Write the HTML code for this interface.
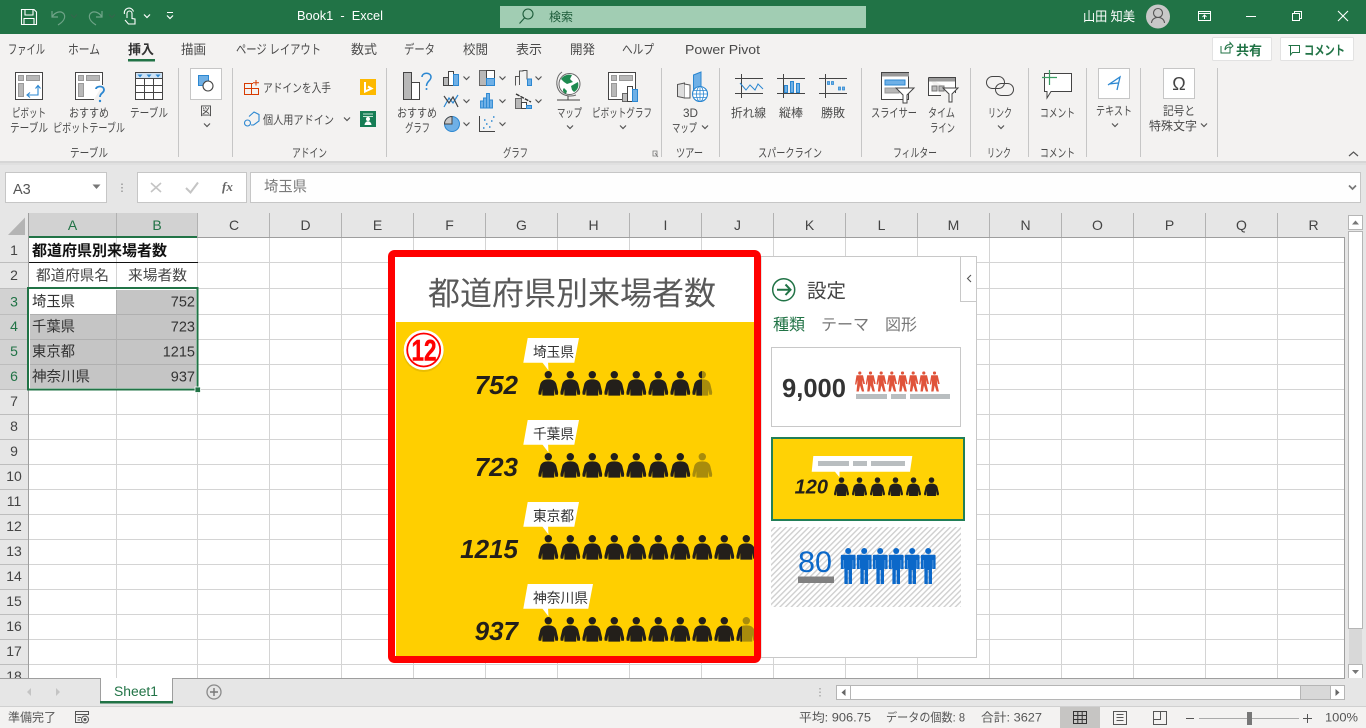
<!DOCTYPE html>
<html lang="ja"><head><meta charset="utf-8"><title>Book1 - Excel</title>
<style>
html,body{margin:0;padding:0;background:#fff;width:1366px;height:728px;overflow:hidden}
svg{display:block}
text{font-family:"Liberation Sans","Noto Sans CJK JP",sans-serif;white-space:pre}
.r{font-size:12px;fill:#4a4a4a}
.rt{font-size:13px;fill:#4a4a4a}
.w{fill:#fff}
.ln{fill:none;stroke:#444;stroke-width:1}
.bl{fill:#6fb0e6;stroke:#2b87d1;stroke-width:1}
.gy{fill:#b8b8b8;stroke:#444;stroke-width:1}
.g2{fill:#bdbdbd}
</style></head><body>
<svg xmlns="http://www.w3.org/2000/svg" width="1366" height="728" viewBox="0 0 1366 728">
<defs>
<path id="chev" d="M-3 -1.5L0 1.5L3 -1.5" fill="none" stroke="#555" stroke-width="1.2"/>
<path id="chw" d="M-3 -1.5L0 1.5L3 -1.5" fill="none" stroke="#fff" stroke-width="1.2"/>
<symbol id="p" viewBox="0 0 20 24.7" preserveAspectRatio="none"><circle cx="10" cy="3.7" r="3.7"/><path d="M10 8.4C5.500 8.400 3 10 2 13L0 21.500L0.400 23.700H3L3.900 18L4.100 24.700H15.900L16.100 18L17 23.700H19.600L20 21.500L18 13C17 10 14.500 8.400 10 8.400Z"/></symbol>
<symbol id="o" viewBox="0 0 10 20" preserveAspectRatio="none"><circle cx="4.800" cy="1.500" r="1.600"/><path d="M1.500 3.800H8L10 12.500H8.300L7.200 8.500L7.400 12L9.200 20H6.900L5 14L3.800 20H1.500L2.300 12L2.300 8.500L1.400 13H0Z"/></symbol>
<symbol id="m" viewBox="0 0 15 36" preserveAspectRatio="none"><circle cx="7.500" cy="3" r="3"/><path d="M1.500 6.800H13.500Q15 6.800 15 8.300V21H12.700L11.300 20.500V36H7.900V22H7.100V36H3.700V20.500L2.300 21H0V8.300Q0 6.800 1.500 6.800Z"/><path d="M2.800 12V20M12.200 12V20" stroke="#6ea6e0" stroke-width=".7" fill="none"/></symbol>
<g id="r7" fill="#231f1a"><use href="#p" x="0" y="0" width="20" height="24.7"/><use href="#p" x="22" y="0" width="20" height="24.7"/><use href="#p" x="44" y="0" width="20" height="24.7"/><use href="#p" x="66" y="0" width="20" height="24.7"/><use href="#p" x="88" y="0" width="20" height="24.7"/><use href="#p" x="110" y="0" width="20" height="24.7"/><use href="#p" x="132" y="0" width="20" height="24.7"/></g>
<polygon id="tail" points="542,362 548.5,370.5 548,362" fill="#fff"/>
<clipPath id="c1"><rect x="692" y="360" width="10" height="40"/></clipPath>
<clipPath id="c4"><rect x="736" y="626" width="6" height="20"/></clipPath>
<pattern id="h" width="4" height="4" patternUnits="userSpaceOnUse" patternTransform="rotate(45)"><rect width="4" height="4" fill="#fff"/><rect width="1.4" height="4" fill="#cfcfcf"/></pattern>
</defs>

<!-- base -->
<rect width="1366" height="728" fill="#e6e6e6"/>
<rect width="1366" height="34" fill="#217346"/>
<rect y="34" width="1366" height="127" fill="#f3f2f1"/>
<rect y="161" width="1366" height="2" fill="#d6d6d6"/><rect y="163" width="1366" height="2" fill="#e0e0e0"/>

<!-- title bar -->
<path d="M21.500 9.500H34L36.500 12V24.500H21.500ZM25 9.500V15H33V9.500M24 24.500V18.500H34V24.500" fill="none" stroke="#fff" stroke-width="1.100"/>
<g fill="none" stroke="#6fa488" stroke-width="1.200"><path d="M52 11V17H58M52 17C55 12 61 10 64 14C66 18 63 22 58 25"/><path d="M102 11V17H96M102 17C99 12 93 10 90 14C88 18 91 22 96 25"/></g>
<use href="#chev" x="74" y="16" style="opacity:.4"/><use href="#chev" x="112" y="16" style="opacity:.4"/>
<path d="M127 18V13.500A2.500 2.500 0 0 1 132 13.500V18.500L135 19V24H128.500L125 20M124.500 14A4.500 4.500 0 0 1 133.500 11.500" fill="none" stroke="#fff" stroke-width="1.100"/>
<use href="#chw" x="147" y="16"/>
<path d="M167 12.500H173" stroke="#fff"/><use href="#chw" x="170" y="17"/>
<text x="297" y="20" font-size="12.500" class="w" textLength="86" lengthAdjust="spacingAndGlyphs">Book1  -  Excel</text>
<rect x="500" y="6" width="366" height="22" fill="#a1cdb3"/>
<circle cx="528" cy="14" r="5" fill="none" stroke="#1d5c3a" stroke-width="1.100"/><path d="M524.500 18L519.500 23.500" stroke="#1d5c3a" stroke-width="1.100"/>
<text x="549" y="21" font-size="12" fill="#1d5c3a">検索</text>
<text x="1083" y="21" font-size="13" class="w" textLength="52" lengthAdjust="spacingAndGlyphs">山田 知美</text>
<circle cx="1158" cy="16.500" r="12" fill="#c8c8c8"/><circle cx="1158" cy="13" r="4.500" fill="none" stroke="#555" stroke-width="1.100"/><path d="M1151.500 23C1152 15.500 1164 15.500 1164.500 23" fill="none" stroke="#555" stroke-width="1.100"/>
<path d="M1198.500 11.500H1210.500V20.500H1198.500ZM1198.500 13.500H1210.500M1204.500 19V15.500M1202.500 17L1204.500 15L1206.500 17" fill="none" stroke="#fff"/>
<path d="M1246 16.500H1256" stroke="#fff"/>
<path d="M1292.500 13.500H1299.500V20.500H1292.500ZM1294.500 13.500V11.500H1301.500V18.500H1299.500" fill="none" stroke="#fff"/>
<path d="M1338 11L1348 21M1348 11L1338 21" stroke="#fff" stroke-width="1.100"/>

<!-- tabs -->
<g class="rt">
<text x="8" y="54" textLength="37" lengthAdjust="spacingAndGlyphs">ファイル</text>
<text x="68" y="54" textLength="32" lengthAdjust="spacingAndGlyphs">ホーム</text>
<text x="128" y="54" textLength="26" lengthAdjust="spacingAndGlyphs" font-weight="700" style="fill:#333">挿入</text>
<text x="181" y="54" textLength="25" lengthAdjust="spacingAndGlyphs">描画</text>
<text x="236" y="54" textLength="85" lengthAdjust="spacingAndGlyphs">ページ レイアウト</text>
<text x="351" y="54" textLength="26" lengthAdjust="spacingAndGlyphs">数式</text>
<text x="404" y="54" textLength="31" lengthAdjust="spacingAndGlyphs">データ</text>
<text x="463" y="54" textLength="25" lengthAdjust="spacingAndGlyphs">校閲</text>
<text x="516" y="54" textLength="26" lengthAdjust="spacingAndGlyphs">表示</text>
<text x="570" y="54" textLength="25" lengthAdjust="spacingAndGlyphs">開発</text>
<text x="622" y="54" textLength="32" lengthAdjust="spacingAndGlyphs">ヘルプ</text>
<text x="685" y="54" textLength="75" lengthAdjust="spacingAndGlyphs">Power Pivot</text>
</g>
<rect x="128" y="59" width="27" height="2.500" fill="#217346"/>
<rect x="1212.500" y="37.500" width="59" height="23" fill="#fff" stroke="#e2e2e2" rx="1"/>
<path d="M1221 46V53H1230V49M1225 50C1225 46 1227 44.500 1230 44.500V42.500L1233 46L1230 48.500V47C1228 47 1226 48 1225 50Z" fill="none" stroke="#217346"/>
<text x="1236" y="55" font-size="13" font-weight="700" fill="#217346" textLength="26" lengthAdjust="spacingAndGlyphs">共有</text>
<rect x="1280.500" y="37.500" width="73" height="23" fill="#fff" stroke="#e2e2e2" rx="1"/>
<path d="M1288.500 45.500H1299.500V52.500H1292.500L1290.500 55V45.500" fill="none" stroke="#217346"/>
<text x="1304" y="55" font-size="13" font-weight="700" fill="#217346" textLength="41" lengthAdjust="spacingAndGlyphs">コメント</text>

<!-- group separators -->
<path d="M178.500 68V157M232.500 68V157M386.500 68V157M661.500 68V157M719.500 68V157M861.500 68V157M970.500 68V157M1028.500 68V157M1086.500 68V157M1140.500 68V157M1217.500 68V157" stroke="#c6c6c6"/>

<!-- ribbon text -->
<g class="r">
<text x="12" y="117" textLength="34" lengthAdjust="spacingAndGlyphs">ピボット</text>
<text x="10" y="132" textLength="38" lengthAdjust="spacingAndGlyphs">テーブル</text>
<text x="69" y="117" textLength="40" lengthAdjust="spacingAndGlyphs">おすすめ</text>
<text x="53" y="132" textLength="72" lengthAdjust="spacingAndGlyphs">ピボットテーブル</text>
<text x="130" y="117" textLength="38" lengthAdjust="spacingAndGlyphs">テーブル</text>
<text x="70" y="157" textLength="38" lengthAdjust="spacingAndGlyphs">テーブル</text>
<text x="200" y="115">図</text>
<text x="263" y="92" textLength="68" lengthAdjust="spacingAndGlyphs">アドインを入手</text>
<text x="263" y="124" textLength="71" lengthAdjust="spacingAndGlyphs">個人用アドイン</text>
<text x="292" y="157" textLength="35" lengthAdjust="spacingAndGlyphs">アドイン</text>
<text x="397" y="117" textLength="40" lengthAdjust="spacingAndGlyphs">おすすめ</text>
<text x="405" y="132" textLength="25" lengthAdjust="spacingAndGlyphs">グラフ</text>
<text x="557" y="117" textLength="25" lengthAdjust="spacingAndGlyphs">マップ</text>
<text x="592" y="117" textLength="60" lengthAdjust="spacingAndGlyphs">ピボットグラフ</text>
<text x="503" y="157" textLength="25" lengthAdjust="spacingAndGlyphs">グラフ</text>
<text x="683" y="117" textLength="15" lengthAdjust="spacingAndGlyphs">3D</text>
<text x="672" y="132" textLength="25" lengthAdjust="spacingAndGlyphs">マップ</text>
<text x="676" y="157" textLength="27" lengthAdjust="spacingAndGlyphs">ツアー</text>
<text x="731" y="117" textLength="35" lengthAdjust="spacingAndGlyphs">折れ線</text>
<text x="779" y="117" textLength="24" lengthAdjust="spacingAndGlyphs">縦棒</text>
<text x="821" y="117" textLength="24" lengthAdjust="spacingAndGlyphs">勝敗</text>
<text x="758" y="157" textLength="64" lengthAdjust="spacingAndGlyphs">スパークライン</text>
<text x="871" y="117" textLength="46" lengthAdjust="spacingAndGlyphs">スライサー</text>
<text x="928" y="117" textLength="27" lengthAdjust="spacingAndGlyphs">タイム</text>
<text x="930" y="132" textLength="25" lengthAdjust="spacingAndGlyphs">ライン</text>
<text x="893" y="157" textLength="44" lengthAdjust="spacingAndGlyphs">フィルター</text>
<text x="988" y="117" textLength="24" lengthAdjust="spacingAndGlyphs">リンク</text>
<text x="987" y="157" textLength="24" lengthAdjust="spacingAndGlyphs">リンク</text>
<text x="1040" y="117" textLength="35" lengthAdjust="spacingAndGlyphs">コメント</text>
<text x="1040" y="157" textLength="35" lengthAdjust="spacingAndGlyphs">コメント</text>
<text x="1096" y="115" textLength="36" lengthAdjust="spacingAndGlyphs">テキスト</text>
<text x="1163" y="115" textLength="32" lengthAdjust="spacingAndGlyphs">記号と</text>
<text x="1149" y="130" textLength="48" lengthAdjust="spacingAndGlyphs">特殊文字</text>
</g>
<use href="#chev" x="207" y="125"/><use href="#chev" x="347" y="119"/><use href="#chev" x="570" y="127"/><use href="#chev" x="623" y="127"/><use href="#chev" x="705" y="127"/><use href="#chev" x="1001" y="127"/><use href="#chev" x="1115" y="125"/><use href="#chev" x="1204" y="125"/>
<use href="#chev" x="466.500" y="78"/><use href="#chev" x="466.500" y="101"/><use href="#chev" x="466.500" y="124"/><use href="#chev" x="502.500" y="78"/><use href="#chev" x="502.500" y="101"/><use href="#chev" x="502.500" y="124"/><use href="#chev" x="538.500" y="78"/><use href="#chev" x="538.500" y="101"/>
<path d="M1349 156L1353.500 152L1358 156" fill="none" stroke="#555" stroke-width="1.200"/>
<path d="M653 151H657V156H653ZM655 153L658 157" fill="none" stroke="#777" stroke-width=".8"/>

<!-- pivot icons -->
<rect x="15.500" y="72.500" width="27" height="27" fill="#fff" stroke="#444"/>
<rect x="18.500" y="75.500" width="5" height="5" class="gy" style="stroke:#999"/><rect x="26.500" y="75.500" width="13" height="5" class="gy" style="stroke:#999"/><rect x="18.500" y="83.500" width="5" height="13" class="gy" style="stroke:#999"/>
<path d="M28 95H38V86M35.500 88.500L38 85.500L40.500 88.500M30 92.500L27 95L30 97.500" fill="none" stroke="#2b87d1" stroke-width="1.100"/>
<path d="M102.500 85V72.500H75.500V99.500H94" fill="#fff" stroke="#444"/>
<rect x="78.500" y="75.500" width="5" height="5" class="gy" style="stroke:#999"/><rect x="86.500" y="75.500" width="13" height="5" class="gy" style="stroke:#999"/><rect x="78.500" y="83.500" width="5" height="13" class="gy" style="stroke:#999"/>
<path d="M96 89C96 86 104 85 104 90C104 93 100 93 100 97" fill="none" stroke="#2b87d1" stroke-width="1.800"/><circle cx="100" cy="101" r="1.200" fill="#2b87d1"/>
<rect x="135.500" y="72.500" width="27" height="27" fill="#fff" stroke="#444"/><rect x="136" y="73" width="26" height="5" fill="#cfe3f5"/>
<path d="M135.500 78.500H162.500M135.500 85.500H162.500M135.500 92.500H162.500M144.500 78.500V99.500M153.500 78.500V99.500" stroke="#444" fill="none"/>
<path d="M137.500 74.500H142.500L140 77.500ZM146.500 74.500H151.500L149 77.500ZM155.500 74.500H160.500L158 77.500Z" fill="#2b87d1"/>

<!-- shapes -->
<rect x="190.500" y="68.500" width="31" height="31" fill="#fff" stroke="#c6c6c6"/>
<rect x="198.500" y="75.500" width="10" height="10" fill="#6fb0e6" stroke="#2b87d1"/><circle cx="208" cy="86" r="5" fill="#fff" stroke="#444" stroke-width="1.100"/>
<!-- addin icons -->
<path d="M244.500 83.500H251.500V94.500H244.500ZM251.500 88.500H258.500V94.500H251.500ZM244.500 88.500H251.500M251.500 83.500H253" fill="none" stroke="#d83b01"/>
<path d="M256 80V85.500M253 82.800H259" stroke="#d83b01"/>
<path d="M249 116.500L254 112L259 114.500V121L253.500 125H251" fill="none" stroke="#2b87d1" stroke-width="1.100"/><circle cx="247.500" cy="123" r="3" fill="none" stroke="#2b87d1" stroke-width="1.100"/>
<rect x="360" y="79" width="16" height="16" fill="#fdb900"/><path d="M365 82V91.500L371.500 88.500L368 86.500" fill="none" stroke="#fff" stroke-width="2"/>
<rect x="360" y="111" width="16" height="16" fill="#167d55"/><path d="M363 114H373M363 116.500H373" stroke="#c3e4d4"/><circle cx="368" cy="119" r="2" fill="#fff"/><path d="M364.500 125C365 120 371 120 371.500 125Z" fill="#fff"/>
<!-- chart icons -->
<rect x="403.500" y="72.500" width="8" height="27" class="gy" /><rect x="411.500" y="82.500" width="8" height="17" fill="#fff" stroke="#444"/>
<path d="M422 77C422 72 431 72 431 77C431 81 426.500 81 426.500 86" fill="none" stroke="#2b87d1" stroke-width="1.500"/><circle cx="426.500" cy="89" r="1" fill="#2b87d1"/>
<rect x="443.500" y="77.500" width="5" height="8" class="gy"/><rect x="448.500" y="71.500" width="5" height="14" fill="#fff" stroke="#444"/><rect x="453.500" y="74.500" width="5" height="11" class="bl"/>
<path d="M444 107L449 98L453 103L458 95" fill="none" stroke="#2b87d1" stroke-width="1.200"/><path d="M444 96L449 103L453 97L458 107" fill="none" stroke="#444" stroke-width="1.200"/>
<circle cx="452" cy="124" r="7.500" fill="#6fb0e6" stroke="#2b87d1"/><path d="M452 124V116.500A7.500 7.500 0 0 0 444.500 124Z" fill="#c9c9c9" stroke="#444"/>
<rect x="479.500" y="70.500" width="7" height="15" class="gy" style="stroke:#666"/><rect x="486.500" y="70.500" width="8" height="8" fill="#fff" stroke="#444"/><rect x="486.500" y="78.500" width="8" height="7" class="bl"/>
<path d="M480.500 108V101H483.500V108ZM483.500 108V98H486.500V108ZM486.500 108V93.500H489.500V108ZM489.500 108V100H492.500V108Z" fill="#6fb0e6" stroke="#2b87d1" stroke-width=".9"/>
<path d="M479.500 116V131.500H495" fill="none" stroke="#444"/><path d="M483 128h1.500M486 124h1.500M489 127h1.500M491 121h1.500M484 120h1.500M493 117h1.500" stroke="#2b87d1" stroke-width="1.500"/>
<path d="M515.500 85.500V76.500H519.500V71H523V70.500H527V79H531V85.500" fill="none" stroke="#555"/><path d="M527.500 79H531.500V85.500H527.500Z" class="bl"/><path d="M519.500 71V85" stroke="#555"/>
<rect x="515.500" y="98.500" width="6" height="10" class="gy" style="stroke:#666"/><rect x="521.500" y="102.500" width="5" height="6" fill="#fff" stroke="#444"/><rect x="526.500" y="105.500" width="5" height="3" class="bl"/><path d="M516 94L531 102" stroke="#333" stroke-width="1.400" stroke-dasharray="4 1"/>
<!-- globe -->
<circle cx="569.500" cy="84" r="10.500" fill="#fff" stroke="#666"/><path d="M561 79C564 75 568 74 572 75L570 79L573 82L567 84L564 82ZM571 86L578 82C579 86 578 90 574 92L572 90ZM564 88L567 91L566 94C563 92 562 90 564 88Z" fill="#1e8a50"/><path d="M562 72C556 76 555 86 560 92C564 96 571 97 576 95" fill="none" stroke="#666"/><path d="M568 96V100M557 100H580" stroke="#444"/>
<!-- pivot chart -->
<rect x="608.500" y="72.500" width="27" height="27" fill="#fff" stroke="#444"/><rect x="611.500" y="75.500" width="5" height="5" class="gy" style="stroke:#999"/><rect x="619.500" y="75.500" width="13" height="5" class="gy" style="stroke:#999"/><rect x="611.500" y="83.500" width="5" height="13" class="gy" style="stroke:#999"/>
<rect x="622.500" y="93.500" width="5" height="8" class="g2" stroke="#666"/><rect x="627.500" y="86.500" width="5" height="15" fill="#fff" stroke="#444"/><rect x="632.500" y="89.500" width="5" height="12" class="bl"/>
<!-- 3D map -->
<path d="M677.500 84.500L684.500 83V98L677.500 96.500Z" fill="#ddd" stroke="#555"/><path d="M684.500 84L690 85V98H684.500" fill="#fff" stroke="#555"/><path d="M693.500 75L701 72V96H693.500Z" fill="#6fb0e6" stroke="#2b87d1"/>
<circle cx="700" cy="94" r="7.500" fill="#fff" stroke="#2b87d1" stroke-width="1.100"/><path d="M692.500 94H707.500M693.500 90.500H706.500M693.500 97.500H706.500M700 86.500V101.500" stroke="#2b87d1" stroke-width=".8"/><ellipse cx="700" cy="94" rx="3.500" ry="7.500" fill="none" stroke="#2b87d1" stroke-width=".8"/>
<!-- sparklines -->
<path d="M741.500 74V98M735 78.500H763M735 93.500H763" stroke="#444" fill="none"/><path d="M740 83L746 90L750 85L755 90L758 84L763 89" fill="none" stroke="#2b87d1"/>
<path d="M783.500 74V98M777 78.500H805M777 93.500H805" stroke="#444" fill="none"/><rect x="784.500" y="85.500" width="3" height="7" class="bl"/><rect x="790.500" y="81.500" width="3" height="11" class="bl"/><rect x="796.500" y="83.500" width="3" height="9" class="bl"/>
<path d="M825.500 74V98M819 78.500H847M819 93.500H847" stroke="#444" fill="none"/><path d="M827.500 81.500h2v3h-2zM831.500 81.500h2v3h-2zM838.500 87h2v3h-2zM842.500 87h2v3h-2zM847 81.500" fill="#6fb0e6" stroke="#2b87d1" stroke-width=".8"/>
<!-- slicer -->
<path d="M881.500 72.500H908.500V99.500H881.500Z" fill="#fff" stroke="#444"/><rect x="882" y="73" width="27" height="3.500" fill="#999"/><rect x="885" y="80" width="20" height="5" class="bl"/><rect x="885" y="88" width="14" height="5" class="gy" style="stroke:#999"/>
<path d="M896 88H914L907 95V103H903V95Z" fill="#fff" stroke="#444"/>
<!-- timeline -->
<path d="M928.500 77.500H955.500V93M928.500 77.500V95.500H941" fill="#fff" stroke="#444"/><rect x="929" y="78" width="26" height="3.500" fill="#999"/><rect x="932" y="86" width="5" height="5" fill="#bbb" stroke="#777"/><rect x="939" y="86" width="5" height="5" fill="#bbb" stroke="#777"/>
<path d="M943 88H958L952 94V102H949V94Z" fill="#fff" stroke="#444"/>
<!-- link -->
<rect x="986.500" y="76.500" width="18" height="12" rx="6" fill="none" stroke="#444"/><rect x="995.500" y="83.500" width="18" height="12" rx="6" fill="none" stroke="#444"/>
<!-- comment -->
<path d="M1044.500 73.500H1071.500V91.500H1051L1047 98V91.500H1044.500Z" fill="#fff" stroke="#444"/><path d="M1042 77.500H1057M1049.500 70V85" stroke="#3a9d62" stroke-width="1.200"/>
<!-- text, symbol -->
<rect x="1098.500" y="68.500" width="31" height="30" fill="#fff" stroke="#c6c6c6"/><path d="M1108 85L1120 77L1117 90M1109 84L1118 83" fill="none" stroke="#2b87d1" stroke-width="1.300"/>
<rect x="1163.500" y="68.500" width="31" height="30" fill="#fff" stroke="#c6c6c6"/><text x="1179" y="90" font-size="18" fill="#444" text-anchor="middle">Ω</text>

<!-- formula bar -->
<rect x="5.500" y="172.500" width="101" height="30" fill="#fff" stroke="#c6c6c6"/>
<text x="13" y="194" font-size="14.500" fill="#555">A3</text>
<path d="M92.500 184.500H100.500L96.500 189Z" fill="#777"/>
<path d="M122 183.500v1.500M122 187v1.500M122 190.500v1.500" stroke="#999" stroke-width="1.500"/>
<rect x="137.500" y="172.500" width="109" height="30" fill="#fff" stroke="#c6c6c6"/>
<path d="M151 183L161 192M161 183L151 192" stroke="#c4c4c4" stroke-width="1.600"/>
<path d="M186 188L190.500 192.500L198 182.500" fill="none" stroke="#c4c4c4" stroke-width="2"/>
<text x="222" y="191" font-size="13" font-style="italic" fill="#666" font-weight="700" style="font-family:'Liberation Serif',serif">fx</text>
<rect x="250.500" y="172.500" width="1110" height="30" fill="#fefefe" stroke="#c6c6c6"/>
<text x="264" y="191.500" font-size="14.500" fill="#7a7a7a" textLength="43" lengthAdjust="spacingAndGlyphs">埼玉県</text>
<path d="M1349 185.500L1352.500 189L1356 185.500" fill="none" stroke="#777" stroke-width="1.700"/>

<!-- headers -->
<rect x="29" y="213" width="168" height="24" fill="#d2d2d2"/>
<rect x="0" y="288" width="28" height="102" fill="#d2d2d2"/>
<path d="M25 217.500V235H8Z" fill="#b4b4b4"/>
<path d="M28.500 213V237M116.500 213V237M197.500 213V237M269.500 213V237M341.500 213V237M413.500 213V237M485.500 213V237M557.500 213V237M629.500 213V237M701.500 213V237M773.500 213V237M845.500 213V237M917.500 213V237M989.500 213V237M1061.500 213V237M1133.500 213V237M1205.500 213V237M1277.500 213V237" stroke="#b2b2b2"/>
<g font-size="14" fill="#444" text-anchor="middle">
<text x="72.500" y="230" fill="#217346">A</text><text x="157" y="230" fill="#217346">B</text><text x="234" y="230">C</text><text x="305.500" y="230">D</text><text x="377.500" y="230">E</text><text x="449.500" y="230">F</text><text x="521.500" y="230">G</text><text x="593.500" y="230">H</text><text x="665.500" y="230">I</text><text x="737.500" y="230">J</text><text x="809.500" y="230">K</text><text x="881.500" y="230">L</text><text x="953.500" y="230">M</text><text x="1025.500" y="230">N</text><text x="1097.500" y="230">O</text><text x="1169.500" y="230">P</text><text x="1241.500" y="230">Q</text><text x="1313.500" y="230">R</text>
<text x="14" y="255">1</text><text x="14" y="280">2</text><text x="14" y="306.500" fill="#217346">3</text><text x="14" y="331" fill="#217346">4</text><text x="14" y="356" fill="#217346">5</text><text x="14" y="381" fill="#217346">6</text><text x="14" y="406">7</text><text x="14" y="431">8</text><text x="14" y="456">9</text><text x="14" y="481">10</text><text x="14" y="506">11</text><text x="14" y="531">12</text><text x="14" y="556">13</text><text x="14" y="581">14</text><text x="14" y="606">15</text><text x="14" y="631">16</text><text x="14" y="656">17</text><text x="14" y="681">18</text>
</g>
<path d="M0 262.500H28M0 288.500H28M0 314.500H28M0 339.500H28M0 364.500H28M0 389.500H28M0 414.500H28M0 439.500H28M0 464.500H28M0 489.500H28M0 514.500H28M0 539.500H28M0 564.500H28M0 589.500H28M0 614.500H28M0 639.500H28M0 664.500H28" stroke="#bdbdbd"/>

<!-- sheet -->
<rect x="29" y="238" width="1316" height="440" fill="#fff"/>
<path d="M116.500 238V678M197.500 238V678M269.500 238V678M341.500 238V678M413.500 238V678M485.500 238V678M557.500 238V678M629.500 238V678M701.500 238V678M773.500 238V678M845.500 238V678M917.500 238V678M989.500 238V678M1061.500 238V678M1133.500 238V678M1205.500 238V678M1277.500 238V678M29 262.500H1345M29 288.500H1345M29 314.500H1345M29 339.500H1345M29 364.500H1345M29 389.500H1345M29 414.500H1345M29 439.500H1345M29 464.500H1345M29 489.500H1345M29 514.500H1345M29 539.500H1345M29 564.500H1345M29 589.500H1345M29 614.500H1345M29 639.500H1345M29 664.500H1345" stroke="#d4d4d4"/>
<path d="M28.500 213V678M197 237.500H1344.500V678" fill="none" stroke="#9e9e9e"/>
<rect x="29" y="236" width="168" height="2" fill="#217346"/>
<path d="M29 262.500H198" stroke="#111"/>
<path d="M116.500 263V288" stroke="#d4d4d4"/>
<!-- cells -->
<rect x="30" y="290" width="166" height="98" fill="#c5c5c5"/>
<rect x="30" y="290" width="86" height="24" fill="#fff"/>
<path d="M30 314.500H196M30 339.500H196M30 364.500H196M116.500 290V388" stroke="#b0b0b0"/>
<text x="32" y="255.500" font-size="15" font-weight="700" fill="#111" textLength="135" lengthAdjust="spacingAndGlyphs">都道府県別来場者数</text>
<text x="36" y="280.500" font-size="14.500" fill="#444" textLength="73" lengthAdjust="spacingAndGlyphs">都道府県名</text>
<text x="128" y="280.500" font-size="14.500" fill="#444" textLength="59" lengthAdjust="spacingAndGlyphs">来場者数</text>
<g font-size="14.500" fill="#333">
<text x="32" y="306.500" textLength="43" lengthAdjust="spacingAndGlyphs">埼玉県</text>
<text x="32" y="331.500" textLength="43" lengthAdjust="spacingAndGlyphs">千葉県</text>
<text x="32" y="356.500" textLength="43" lengthAdjust="spacingAndGlyphs">東京都</text>
<text x="32" y="381.500" textLength="58" lengthAdjust="spacingAndGlyphs">神奈川県</text>
<g text-anchor="end"><text x="195" y="306.500">752</text><text x="195" y="331.500">723</text><text x="195" y="356.500">1215</text><text x="195" y="381.500">937</text></g>
</g>
<path d="M29.500 289.500H196.500V388.500H29.500Z" fill="none" stroke="#fff"/>
<rect x="28" y="288" width="169.500" height="101.500" fill="none" stroke="#217346" stroke-width="2"/>
<rect x="195" y="387" width="5.500" height="5.500" fill="#217346" stroke="#fff" stroke-width=".8"/>

<!-- settings panel -->
<rect x="761" y="256.500" width="215.500" height="401" fill="#fff" stroke="#c8c8c8"/>
<path d="M960.500 257V301.500H976" fill="#fff" stroke="#c8c8c8"/>
<path d="M971 275L967.500 278.500L971 282" fill="none" stroke="#555" stroke-width="1.100"/>
<circle cx="783.700" cy="289.700" r="11" fill="none" stroke="#217346" stroke-width="1.500"/>
<path d="M777 289.700H790M785.500 284.500L790.500 289.700L785.500 295" fill="none" stroke="#217346" stroke-width="2"/>
<text x="807" y="297.500" font-size="19.500" fill="#444" textLength="39" lengthAdjust="spacingAndGlyphs">設定</text>
<text x="773" y="330" font-size="16" fill="#217346">種類</text>
<text x="821" y="330" font-size="16" fill="#777">テーマ</text>
<text x="885" y="330" font-size="16" fill="#777">図形</text>
<!-- card 1 -->
<rect x="771.500" y="347.500" width="189" height="79" fill="#fff" stroke="#c8c8c8"/>
<text x="782" y="397" font-size="26" font-weight="700" fill="#333" textLength="64" lengthAdjust="spacingAndGlyphs">9,000</text>
<g fill="#e0533a"><use href="#o" x="855" y="371.500" width="10" height="20"/><use href="#o" x="865.700" y="371.500" width="10" height="20"/><use href="#o" x="876.400" y="371.500" width="10" height="20"/><use href="#o" x="887" y="371.500" width="10" height="20"/><use href="#o" x="897.700" y="371.500" width="10" height="20"/><use href="#o" x="908.400" y="371.500" width="10" height="20"/><use href="#o" x="919" y="371.500" width="10" height="20"/><use href="#o" x="929.700" y="371.500" width="10" height="20"/></g>
<path d="M856 394h31v5h-31zM891 394h15v5h-15zM910 394h40v5h-40z" fill="#b9bec0"/>
<!-- card 2 -->
<rect x="772" y="438" width="192" height="82" fill="#ffd205" stroke="#217f58" stroke-width="2"/>
<polygon points="813.300,456 912.300,456 910,471.700 835,471.700 839.300,477 839.300,471.700 811.700,471.700" fill="#fff"/>
<polygon points="835,471.500 839.500,477 839.500,471.500" fill="#fff"/>
<path d="M818 461h31v5h-31zM853 461h14v5h-14zM871 461h34v5h-34z" fill="#b9bec0"/>
<text x="828" y="493.500" font-size="20" font-weight="700" font-style="italic" fill="#231f1a" text-anchor="end">120</text>
<g fill="#231f1a"><use href="#p" x="834" y="477.300" width="15" height="18.700"/><use href="#p" x="852" y="477.300" width="15" height="18.700"/><use href="#p" x="870" y="477.300" width="15" height="18.700"/><use href="#p" x="888" y="477.300" width="15" height="18.700"/><use href="#p" x="906" y="477.300" width="15" height="18.700"/><use href="#p" x="924" y="477.300" width="15" height="18.700"/></g>
<!-- card 3 -->
<rect x="771" y="527" width="190" height="80" fill="url(#h)"/>
<text x="798" y="572" font-size="30" fill="#0b68c9" textLength="34" lengthAdjust="spacingAndGlyphs">80</text>
<rect x="798" y="576.500" width="36" height="6.500" fill="#808080"/>
<g fill="#0b68c9"><use href="#m" x="840.700" y="548" width="15" height="36"/><use href="#m" x="856.700" y="548" width="15" height="36"/><use href="#m" x="872.700" y="548" width="15" height="36"/><use href="#m" x="888.700" y="548" width="15" height="36"/><use href="#m" x="904.700" y="548" width="15" height="36"/><use href="#m" x="920.700" y="548" width="15" height="36"/></g>

<!-- chart -->
<rect x="392" y="254" width="365" height="68" fill="#fff"/>
<rect x="392" y="322" width="4" height="335" fill="#fff"/>
<rect x="396" y="322" width="360" height="336" fill="#ffcf00"/>
<text x="428" y="304.500" font-size="32" fill="#595959" textLength="288" lengthAdjust="spacingAndGlyphs">都道府県別来場者数</text>
<circle cx="423.700" cy="351.500" r="20.500" fill="#b89400" opacity=".3"/>
<circle cx="423.700" cy="350" r="20" fill="#fff"/>
<circle cx="423.700" cy="350" r="16.500" fill="#fff" stroke="#f00" stroke-width="1.800"/>
<text x="411.500" y="360.500" font-size="30" font-weight="700" fill="#f00" stroke="#f00" stroke-width=".5" textLength="25" lengthAdjust="spacingAndGlyphs">12</text>

<g id="labels">
<polygon points="527.700,338 579,338 574.300,362.700 523.300,362.700" fill="#fff"/><use href="#tail"/>
<text x="533" y="357" font-size="14" fill="#333" textLength="41" lengthAdjust="spacingAndGlyphs">埼玉県</text>
<polygon points="527.700,420 579,420 574.300,444.700 523.300,444.700" fill="#fff"/><use href="#tail" y="82"/>
<text x="533" y="439" font-size="14" fill="#333" textLength="41" lengthAdjust="spacingAndGlyphs">千葉県</text>
<polygon points="527.700,502 579,502 574.300,526.700 523.300,526.700" fill="#fff"/><use href="#tail" y="164"/>
<text x="533" y="521" font-size="14" fill="#333" textLength="41" lengthAdjust="spacingAndGlyphs">東京都</text>
<polygon points="527.700,584 593,584 588.300,608.700 523.300,608.700" fill="#fff"/><use href="#tail" y="246"/>
<text x="533" y="603" font-size="14" fill="#333" textLength="55" lengthAdjust="spacingAndGlyphs">神奈川県</text>
</g>
<g font-size="26" font-weight="700" font-style="italic" fill="#231f1a" text-anchor="end">
<text x="518" y="394">752</text><text x="518" y="476">723</text><text x="518" y="558">1215</text><text x="518" y="640">937</text>
</g>
<!-- people -->
<use href="#r7" x="538.300" y="371"/>
<use href="#p" x="692.300" y="371" width="20" height="24.700" fill="#a88c0c"/>
<g clip-path="url(#c1)"><use href="#p" x="692.300" y="371" width="20" height="24.700" fill="#231f1a"/></g>
<use href="#r7" x="538.300" y="453"/>
<use href="#p" x="692.300" y="453" width="20" height="24.700" fill="#a88c0c"/>
<use href="#r7" x="538.300" y="535"/>
<g fill="#231f1a"><use href="#p" x="692.300" y="535" width="20" height="24.700"/><use href="#p" x="714.300" y="535" width="20" height="24.700"/><use href="#p" x="736.300" y="535" width="20" height="24.700"/></g>
<use href="#r7" x="538.300" y="617"/>
<g fill="#231f1a"><use href="#p" x="692.300" y="617" width="20" height="24.700"/><use href="#p" x="714.300" y="617" width="20" height="24.700"/></g>
<use href="#p" x="736.300" y="617" width="20" height="24.700" fill="#a88c0c"/>
<g clip-path="url(#c4)"><use href="#p" x="736.300" y="617" width="20" height="24.700" fill="#231f1a"/></g>
<!-- red frame -->
<rect x="391.500" y="253.500" width="366" height="406" rx="3" fill="none" stroke="#f00" stroke-width="7"/>

<!-- v scrollbar -->
<rect x="1345" y="213" width="21" height="466" fill="#e6e6e6"/>
<rect x="1348.500" y="215.500" width="14" height="14" fill="#fff" stroke="#b5b5b5"/><path d="M1352 224.500H1359L1355.500 220.500Z" fill="#777"/>
<rect x="1348.500" y="231.500" width="14" height="397" fill="#fff" stroke="#b5b5b5"/>
<rect x="1349" y="629" width="13" height="35" fill="#d8d8d8"/>
<rect x="1348.500" y="664.500" width="14" height="14" fill="#fff" stroke="#b5b5b5"/><path d="M1352 670H1359L1355.500 674Z" fill="#777"/>

<!-- sheet tabs -->
<rect x="0" y="678" width="1366" height="28" fill="#e6e6e6"/>
<path d="M0 678.500H100M172 678.500H1345" stroke="#9e9e9e"/>
<path d="M100.500 678V703M172.500 678V703" stroke="#9e9e9e"/>
<rect x="101" y="678" width="71" height="23" fill="#fff"/>
<rect x="100" y="701" width="73" height="2.500" fill="#217346"/>
<text x="114" y="696" font-size="13.500" fill="#217346" textLength="44" lengthAdjust="spacingAndGlyphs">Sheet1</text>
<path d="M31 688L27 692L31 696ZM56 688L60 692L56 696Z" fill="#c4c4c4"/>
<circle cx="214" cy="692" r="7" fill="none" stroke="#8a8a8a" stroke-width="1.300"/><path d="M210 692H218M214 688V696" stroke="#777" stroke-width="1.400"/>
<path d="M820 688v1.500M820 691.500v1.500M820 695v1.500" stroke="#aaa" stroke-width="1.500"/>
<rect x="836.500" y="685.500" width="508" height="14" fill="#d8d8d8" stroke="#b5b5b5"/>
<rect x="836.500" y="685.500" width="14" height="14" fill="#fff" stroke="#b5b5b5"/><path d="M845.500 689V696L841.500 692.500Z" fill="#666"/>
<rect x="850.500" y="685.500" width="450" height="14" fill="#fff" stroke="#b5b5b5"/>
<rect x="1330.500" y="685.500" width="14" height="14" fill="#fff" stroke="#b5b5b5"/><path d="M1335.500 689V696L1339.500 692.500Z" fill="#666"/>

<!-- status bar -->
<rect x="0" y="706" width="1366" height="22" fill="#f3f2f1"/><path d="M0 706.500H1366" stroke="#d0d0d0"/>
<g font-size="12" fill="#555">
<text x="8" y="721.500" textLength="48" lengthAdjust="spacingAndGlyphs">準備完了</text>
<text x="799" y="721.500" textLength="72" lengthAdjust="spacingAndGlyphs">平均: 906.75</text>
<text x="886" y="721.500" textLength="79" lengthAdjust="spacingAndGlyphs">データの個数: 8</text>
<text x="981" y="721.500" textLength="61" lengthAdjust="spacingAndGlyphs">合計: 3627</text>
<text x="1325" y="721.500" textLength="33" lengthAdjust="spacingAndGlyphs">100%</text>
</g>
<path d="M75.500 711.500H88.500V714.500H75.500ZM75.500 714.500V722.500H82M77.500 717.500H81M77.500 720H80" fill="none" stroke="#555"/><circle cx="85" cy="719.500" r="3.500" fill="none" stroke="#555"/><circle cx="85" cy="719.500" r="1.500" fill="#555"/>
<rect x="1060" y="707" width="40" height="21" fill="#c6c5c3"/>
<path d="M1073.500 711.500H1086.500V723.500H1073.500ZM1073.500 715.500H1086.500M1073.500 719.500H1086.500M1077.800 711.500V723.500M1082.200 711.500V723.500" fill="none" stroke="#333"/>
<path d="M1113.500 711.500H1126.500V724.500H1113.500ZM1116.500 714.500H1123.500M1116.500 717.500H1123.500M1116.500 720.500H1123.500" fill="none" stroke="#555"/>
<path d="M1153.500 711.500H1166.500V724.500H1153.500ZM1153.500 719.500H1160.500V711.500" fill="none" stroke="#555"/>
<path d="M1186 718.500H1194M1303 718.500H1312M1307.500 714V723" stroke="#555"/>
<path d="M1199 718.500H1299" stroke="#aaa"/>
<rect x="1247" y="712" width="5" height="13" fill="#777"/>
</svg>
</body></html>
